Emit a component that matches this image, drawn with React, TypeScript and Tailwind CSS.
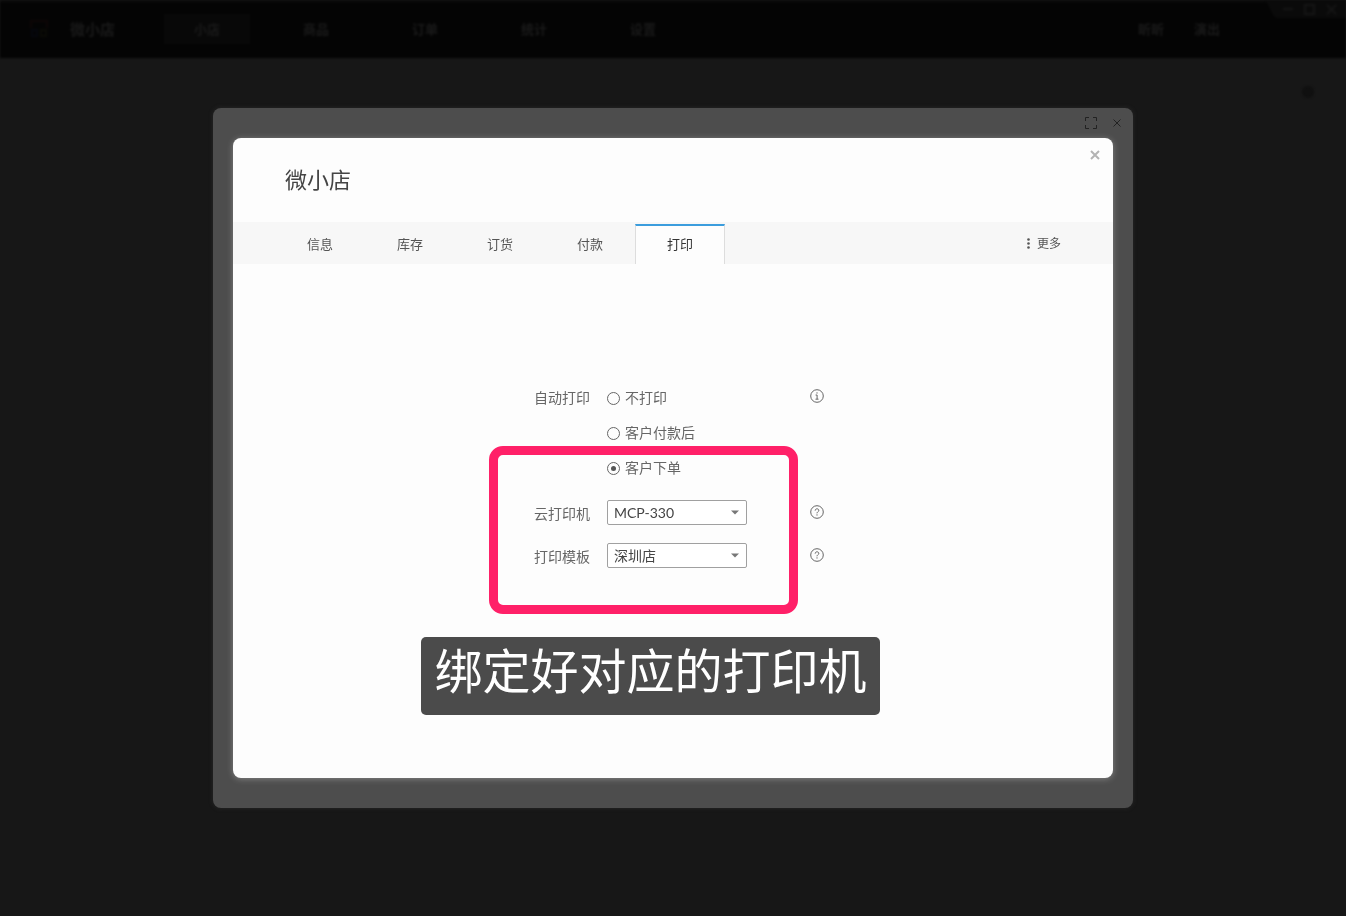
import { useState } from "react";
import type { ReactNode } from "react";

type SelectFieldProps = {
  id: string;
  label: string;
  options: string[];
  hint: string;
};

const menu = ["小店", "商品", "订单", "统计", "设置"];
const tabs = ["信息", "库存", "订货", "付款", "打印"];
const printModes = ["不打印", "客户付款后", "客户下单"];

function HintButton({ label, children }: { label: string; children: ReactNode }) {
  return (
    <button type="button" aria-label={label} className="text-[#555]">
      <svg width="14" height="14" viewBox="0 0 14 14" fill="none" stroke="currentColor">
        <circle cx="7" cy="7" r="6.3" strokeWidth="0.9" />
        {children}
      </svg>
    </button>
  );
}

function SelectField({ id, label, options, hint }: SelectFieldProps) {
  return (
    <div className="flex h-[43px] items-center">
      <label htmlFor={id} className="w-[73px]">
        {label}
      </label>
      <div className="relative w-[140px]">
        <select
          id={id}
          className="block h-[25px] w-full appearance-none rounded-[2px] border border-[#a0a0a0] bg-white pl-1.5 pr-6 font-['Lato','Noto_Sans_CJK_SC',sans-serif] text-sm leading-5 text-[#444] outline-none"
        >
          {options.map((option) => (
            <option key={option}>{option}</option>
          ))}
        </select>
        <svg
          className="pointer-events-none absolute right-2 top-[10px]"
          width="8"
          height="5"
          viewBox="0 0 8 5"
        >
          <path d="M0 0.5h8L4 4.5z" fill="#777" />
        </svg>
      </div>
      <div className="ml-auto flex pb-0.5">
        <HintButton label={hint}>
          <path
            d="M5.2 5.6c0-1.1.8-1.8 1.8-1.8s1.8.7 1.8 1.6c0 1.300-1.8 1.400-1.8 2.900"
            strokeWidth="0.9"
          />
          <path d="M7 9.400v1.100" strokeWidth="1" />
        </HintButton>
      </div>
    </div>
  );
}

function TopBar() {
  return (
    <header className="relative flex h-[58px] items-center border-t-2 border-[#0c0c0c] bg-[#040404] pb-0.5 pl-[30px] text-[13px] font-bold text-[#1a1a1a] blur-[1px]">
      <svg width="18" height="18" viewBox="0 0 18 18" fill="none" strokeWidth="2">
        <path d="M1 8V1h16v7" stroke="#0e0606" />
        <path d="M2 16v-6h5v6z" stroke="#06070e" />
        <path d="M11 16v-6h5v6z" stroke="#0b0b05" />
      </svg>
      <span className="ml-[22px] text-[15px]">微小店</span>
      <nav className="ml-[49px] flex gap-[23px]">
        {menu.map((item) => (
          <a
            key={item}
            href="#"
            className={
              item === "小店"
                ? "flex h-[30px] w-[86px] items-center justify-center bg-[#080808]"
                : "flex h-[30px] w-[86px] items-center justify-center"
            }
          >
            {item}
          </a>
        ))}
      </nav>
      <div className="ml-auto mr-[126px] flex gap-[30px]">
        <a href="#">昕昕</a>
        <a href="#">演出</a>
      </div>
      <div className="absolute right-0 -top-0.5">
        <svg width="84" height="18" viewBox="0 0 84 18" fill="none" stroke="#151515" strokeWidth="2">
          <path d="M0 0h84v18H16C8 18 8 0 0 0z" fill="#0a0a0a" stroke="none" />
          <path d="M21 9h10M43 5h9v9h-9zM65 5l9 9M74 5l-9 9" />
        </svg>
      </div>
    </header>
  );
}

export default function App() {
  const [activeTab, setActiveTab] = useState("打印");
  const [printMode, setPrintMode] = useState("客户下单");

  return (
    <div className="min-h-screen bg-[#171717] font-['Noto_Sans_CJK_SC',sans-serif]">
      <TopBar />
      <div className="flex justify-end pr-8 pt-7">
        <span className="h-3 w-3 rounded-full bg-[#101010] blur-[1px]" />
      </div>

      <div className="fixed inset-0 flex items-center justify-center">
        <div className="w-full max-w-[920px] rounded-lg bg-[#4d4d4d] px-5 pb-[30px] shadow-[0_0_5px_rgba(80,80,80,0.3)]">
          <div className="flex h-[30px] items-center justify-end gap-4 text-[#222]">
            <button type="button" aria-label="全屏">
              <svg width="12" height="12" viewBox="0 0 12 12" fill="none" stroke="currentColor">
                <path d="M.5 4V.5H4M8 .5h3.5V4M11.5 8v3.5H8M4 11.5H.5V8" />
              </svg>
            </button>
            <button type="button" aria-label="关闭窗口" className="-mr-2">
              <svg width="8" height="8" viewBox="0 0 8 8" fill="none" stroke="currentColor">
                <path d="M.5.5l7 7M7.5.5l-7 7" />
              </svg>
            </button>
          </div>

          <main className="relative min-h-[640px] rounded-lg bg-[#fdfdfd] shadow-[0_1px_6px_rgba(255,255,255,0.3)]">
            <button
              type="button"
              aria-label="关闭"
              className="absolute right-[13px] top-3 text-[#b3b3b3]"
            >
              <svg width="10" height="10" viewBox="0 0 10 10" fill="none" stroke="currentColor" strokeWidth="2">
                <path d="M1 1l8 8M9 1L1 9" />
              </svg>
            </button>
            <h1 className="flex h-[84px] items-center pb-1 pl-[52px] text-[22px] text-[#444]">
              微小店
            </h1>

            <div className="flex h-[42px] items-end bg-[#f7f7f7] pl-[42px] pr-[52px] text-[13px] text-[#555]">
              {tabs.map((tab) => (
                <button
                  key={tab}
                  type="button"
                  onClick={() => setActiveTab(tab)}
                  className={
                    tab === activeTab
                      ? "h-10 w-[90px] border-x border-t-2 border-x-[#ddd] border-t-[#3b9ddd] bg-[#fdfdfd] pb-0.5 text-[#333]"
                      : "h-10 w-[90px] border-t-2 border-transparent pb-0.5"
                  }
                >
                  {tab}
                </button>
              ))}
              <button
                type="button"
                className="ml-auto flex h-10 items-center gap-[7px] pb-0.5 text-xs"
              >
                <svg width="3" height="11" viewBox="0 0 3 11" fill="currentColor">
                  <circle cx="1.5" cy="1.5" r="1.3" />
                  <circle cx="1.5" cy="5.5" r="1.3" />
                  <circle cx="1.5" cy="9.5" r="1.3" />
                </svg>
                更多
              </button>
            </div>

            <form className="mx-auto w-[302px] pl-3 pt-[116px] text-sm text-[#666]">
              <fieldset className="flex">
                <legend className="float-left flex h-[35px] w-[73px] items-center pb-0.5">
                  自动打印
                </legend>
                <div>
                  {printModes.map((mode) => (
                    <label key={mode} className="flex h-[35px] items-center gap-[5px] pb-0.5">
                      <input
                        type="radio"
                        name="printMode"
                        checked={printMode === mode}
                        onChange={() => setPrintMode(mode)}
                        className="mt-1 grid h-[13px] w-[13px] appearance-none place-content-center rounded-full border border-[#666] checked:before:h-[5px] checked:before:w-[5px] checked:before:rounded-full checked:before:bg-[#555] checked:before:content-['']"
                      />
                      {mode}
                    </label>
                  ))}
                </div>
                <div className="ml-auto flex h-8 items-center">
                  <HintButton label="自动打印说明">
                    <path d="M7 3.300v1.300M5.600 6h1.500v4M5.500 10.200h3" strokeWidth="0.9" />
                  </HintButton>
                </div>
              </fieldset>
              <div className="pt-1.5">
                <SelectField id="printer" label="云打印机" options={["MCP-330"]} hint="云打印机帮助" />
                <SelectField id="template" label="打印模板" options={["深圳店"]} hint="打印模板帮助" />
              </div>
            </form>

            <div className="pointer-events-none absolute left-[256px] top-[308px] h-[168px] w-[309px] rounded-[14px] border-[9px] border-[#ff2068]" />
            <p className="absolute left-[188px] top-[499px] flex h-[78px] w-[459px] justify-center whitespace-nowrap rounded-[5px] bg-[#4b4b4b] text-5xl leading-[62px] text-white">
              绑定好对应的打印机
            </p>
          </main>
        </div>
      </div>
    </div>
  );
}
